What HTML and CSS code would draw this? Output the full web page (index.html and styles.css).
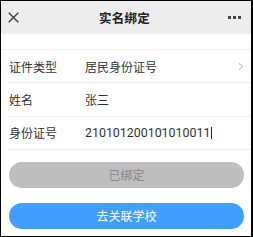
FILE: index.html
```html
<!DOCTYPE html>
<html lang="zh">
<head>
<meta charset="utf-8">
<title>实名绑定</title>
<link rel="stylesheet" href="styles.css">
</head>
<body>
<div class="frame">
  <header class="nav">
    <span class="nav-left">
      <svg class="icon-close" width="11" height="11" viewBox="0 0 11 11"><path d="M0.7 0.7 L10.3 10.3 M10.3 0.7 L0.7 10.3" stroke="#3a3a3a" stroke-width="1.3" fill="none"/></svg>
    </span>
    <span class="nav-title">实名绑定</span>
    <span class="nav-right">
      <span class="dots"><i></i><i></i><i></i></span>
    </span>
  </header>
  <div class="spacer"></div>
  <div class="form">
    <div class="row">
      <span class="label">证件类型</span>
      <span class="value">居民身份证号</span>
      <svg class="chevron" width="6" height="9" viewBox="0 0 6 9"><path d="M1 1 L4.5 4.5 L1 8" stroke="#c4c4c4" stroke-width="1.2" fill="none"/></svg>
    </div>
    <div class="row">
      <span class="label">姓名</span>
      <span class="value">张三</span>
    </div>
    <div class="row">
      <span class="label">身份证号</span>
      <span class="value num">210101200101010011<span class="cursor"></span></span>
    </div>
  </div>
  <div class="actions">
    <button class="btn btn-disabled" type="button">已绑定</button>
    <button class="btn btn-primary" type="button">去关联学校</button>
  </div>
</div>
</body>
</html>
```

FILE: styles.css
```css
* { box-sizing: border-box; }
html, body { margin: 0; padding: 0; background: #fff; }
body {
  font-family: Roboto, "Noto Sans CJK SC", sans-serif;
  color: #333;
}
.frame {
  width: 253px;
  height: 237px;
  border: 1px solid #000;
  border-right-width: 2px;
  display: flex;
  flex-direction: column;
  overflow: hidden;
}
.nav {
  height: 33px;
  flex: none;
  background: #ededed;
  display: grid;
  grid-template-columns: 1fr auto 1fr;
  align-items: center;
  padding: 0 10px 0 7px;
}
.nav-left { display: flex; align-items: center; }
.icon-close { display: block; }
.nav-title {
  font-size: 12.5px;
  font-weight: 700;
  color: #222;
  letter-spacing: 0.2px;
}
.nav-right { display: flex; justify-content: flex-end; align-items: center; }
.dots { display: flex; gap: 2px; }
.dots i {
  display: block;
  width: 3px;
  height: 3px;
  background: #444;
}
.spacer { height: 15px; flex: none; }
.form { border-top: 1px solid #efefef; }
.row {
  height: 33.3px;
  margin-left: 8px;
  border-bottom: 1px solid #efefef;
  display: flex;
  align-items: center;
  font-size: 12px;
  padding-right: 7px;
}
.label { width: 76px; flex: none; color: #333; }
.value { flex: 1; color: #333; display: flex; align-items: center; }
.num { font-size: 12.4px; }
.cursor {
  display: inline-block;
  width: 1px;
  height: 12px;
  background: #222;
  margin-left: 1px;
}
.chevron { display: block; flex: none; }
.actions {
  padding: 12px 7px 0 8px;
  display: flex;
  flex-direction: column;
  gap: 15px;
}
.btn {
  height: 26px;
  border: none;
  border-radius: 13px;
  font-family: Roboto, "Noto Sans CJK SC", sans-serif;
  font-size: 12px;
  padding: 0;
  width: 100%;
}
.btn-disabled { background: #bebebe; color: #888; }
.btn-primary { background: #409eff; color: #fff; }
```
